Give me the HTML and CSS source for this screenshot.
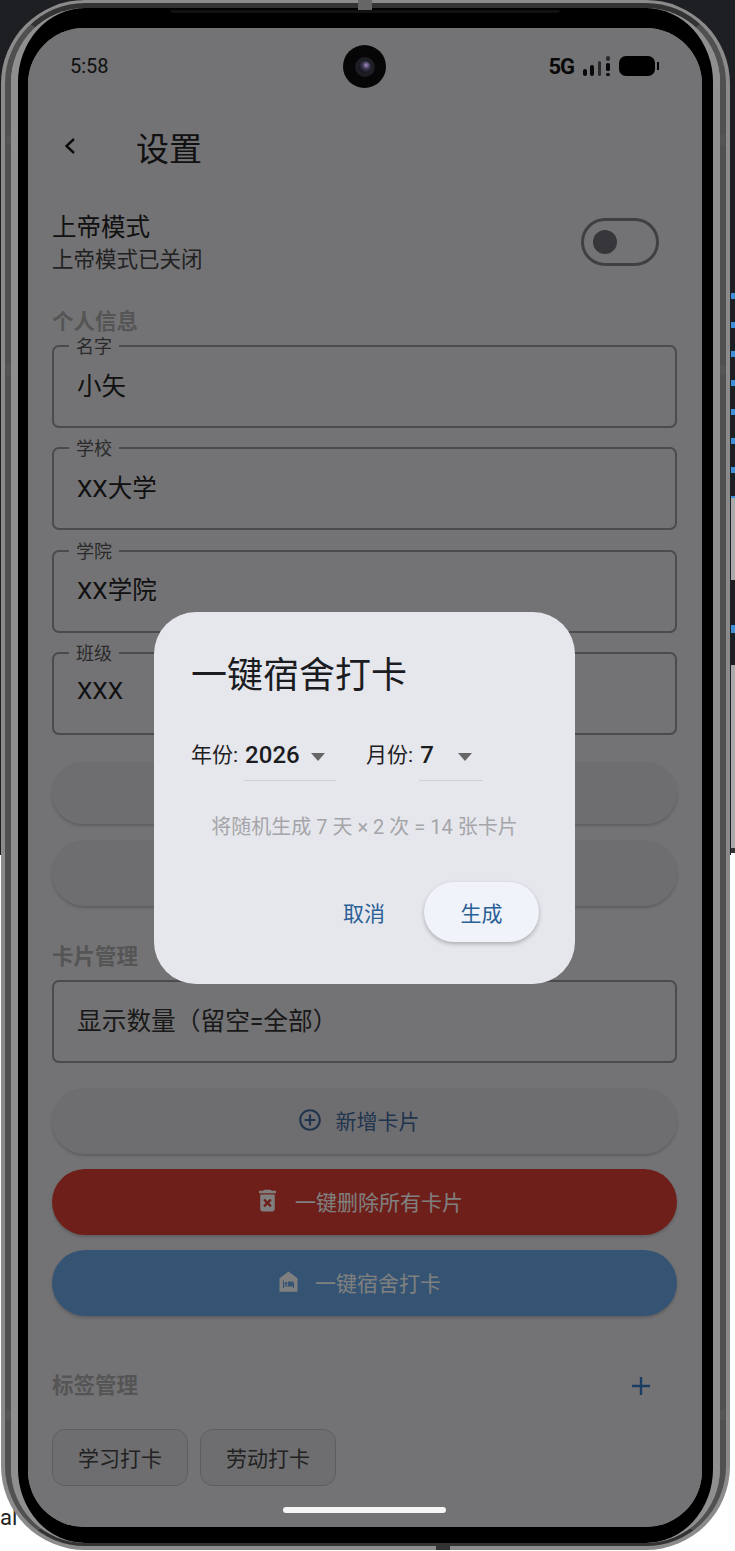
FILE: index.html
```html
<!DOCTYPE html>
<html lang="zh-CN">
<head>
  <meta charset="UTF-8">
  <title>设置</title>
  <link rel="stylesheet" href="styles.css">
</head>
<body>
  <div class="page">
    <div class="phone">
      <div class="rim">
        <div class="bezel">
          <div class="screen">

            <div class="status-bar">
              <span class="clock">5:58</span>
              <div class="status-icons">
                <span class="net">5G</span>
                <svg class="signal" width="28" height="20" viewBox="0 0 28 20">
                  <rect x="1" y="13" width="4" height="7" rx="2" fill="#111"/>
                  <rect x="8" y="9" width="4" height="11" rx="2" fill="#111"/>
                  <rect x="16" y="5" width="3" height="15" rx="1.5" fill="#555"/>
                  <rect x="24" y="0" width="4" height="5" rx="2" fill="#555"/>
                  <rect x="24" y="7" width="4" height="8" rx="1.5" fill="#111"/>
                  <rect x="24" y="17" width="4" height="3" rx="1.5" fill="#111"/>
                </svg>
                <div class="battery"></div>
              </div>
            </div>

            <div class="app-bar">
              <svg class="back" width="14" height="18" viewBox="0 0 14 18">
                <path d="M11 2L3.5 9l7.5 7" fill="none" stroke="#151515" stroke-width="2.4"/>
              </svg>
              <h1>设置</h1>
            </div>

            <div class="god-row">
              <div class="god-text">
                <div class="god-title">上帝模式</div>
                <div class="god-sub">上帝模式已关闭</div>
              </div>
              <div class="toggle"><span class="knob"></span></div>
            </div>

            <div class="content">
              <h2 class="section first">个人信息</h2>
              <div class="fields">
                <div class="field"><span class="field-label">名字</span>小矢</div>
                <div class="field"><span class="field-label">学校</span>XX大学</div>
                <div class="field"><span class="field-label">学院</span>XX学院</div>
                <div class="field"><span class="field-label">班级</span>XXX</div>
              </div>

              <div class="btn-group top-group">
                <div class="btn slim"></div>
                <div class="btn"></div>
              </div>

              <h2 class="section cards">卡片管理</h2>
              <div class="field plain">显示数量（留空=全部）</div>

              <div class="btn-group actions">
                <div class="btn">
                  <svg width="26" height="26" viewBox="0 0 24 24" fill="#42689c"><path d="M13 7h-2v4H7v2h4v4h2v-4h4v-2h-4V7zm-1-5C6.48 2 2 6.48 2 12s4.48 10 10 10 10-4.48 10-10S17.52 2 12 2zm0 18c-4.41 0-8-3.59-8-8s3.59-8 8-8 8 3.59 8 8-3.59 8-8 8z"/></svg>
                  新增卡片
                </div>
                <div class="btn danger">
                  <svg width="29" height="29" viewBox="0 0 24 24" fill="#fff"><path d="M6 19c0 1.1.9 2 2 2h8c1.1 0 2-.9 2-2V7H6v12zm2.46-7.12l1.41-1.41L12 12.59l2.12-2.12 1.41 1.41L13.41 14l2.12 2.12-1.41 1.41L12 15.41l-2.12 2.12-1.41-1.41L10.59 14l-2.13-2.12zM15.5 4l-1-1h-5l-1 1H5v2h14V4z"/></svg>
                  一键删除所有卡片
                </div>
                <div class="btn primary">
                  <svg width="27" height="27" viewBox="0 0 24 24" fill="#fff" fill-rule="evenodd"><path d="M12 3L4 9v12h16V9L12 3zM9.75 12.5c.69 0 1.25.56 1.25 1.25S10.44 15 9.75 15 8.5 14.44 8.5 13.75s.56-1.25 1.25-1.25zM17 18h-1v-1.5H8V18H7v-7h1v4.5h3.5V12H15c1.1 0 2 .9 2 2v4z"/></svg>
                  一键宿舍打卡
                </div>
              </div>

              <div class="tags-head">
                <h2 class="section">标签管理</h2>
                <svg class="tag-add" width="20" height="20" viewBox="0 0 20 20">
                  <path d="M10 1v18M1 10h18" stroke="#357ac8" stroke-width="2.4"/>
                </svg>
              </div>
              <div class="chips">
                <div class="chip">学习打卡</div>
                <div class="chip">劳动打卡</div>
              </div>
            </div>

            <!-- dialog and scrim -->
            <div class="scrim">
              <div class="dialog">
                <div class="dialog-title">一键宿舍打卡</div>
                <div class="pickers">
                  <div class="picker">
                    <span class="picker-label">年份:</span>
                    <div class="dropdown year"><b>2026</b><i class="arrow"></i></div>
                  </div>
                  <div class="picker">
                    <span class="picker-label">月份:</span>
                    <div class="dropdown month"><b>7</b><i class="arrow"></i></div>
                  </div>
                </div>
                <div class="note">将随机生成 7 天 × 2 次 = 14 张卡片</div>
                <div class="dialog-actions">
                  <span class="text-btn">取消</span>
                  <span class="text-btn raised">生成</span>
                </div>
              </div>
            </div>

            <div class="home-bar"></div>
            <div class="camera"><span class="lens"></span></div>
          </div>
        </div>
      </div>
      <span class="mark mark-tl"></span>
      <span class="mark mark-ml"></span>
      <span class="mark mark-bl"></span>
      <span class="mark mark-tr"></span>
      <span class="mark mark-mr"></span>
      <span class="mark mark-br"></span>
      <span class="cap-top"></span>
      <span class="cap-bottom"></span>
      <span class="notch-line"></span>
    </div>

    <div class="peek">
      <div class="peek-code"></div>
      <div class="peek-grey"></div>
      <div class="peek-code short"></div>
      <div class="peek-grey long"></div>
      <div class="peek-dark"></div>
      <div class="peek-white"></div>
    </div>
    <span class="stray">al</span>
  </div>
</body>
</html>
```

FILE: styles.css
```css
* {
  box-sizing: border-box;
  margin: 0;
  padding: 0;
}

body {
  font-family: Roboto, "Noto Sans CJK SC", sans-serif;
  color: #222;
}

.page {
  position: relative;
  display: flex;
  width: 735px;
  height: 1551px;
  overflow: hidden;
  background: linear-gradient(#1e1f22 0, #1e1f22 855px, #fff 855px);
}

/* phone frame */
.phone {
  position: relative;
  z-index: 1;
  flex: none;
  width: 729px;
  height: 1550px;
  margin-left: 1px;
  border: solid #8b8b8b;
  border-width: 3px 4px 4px 4px;
  border-radius: 84px;
  background: #8b8b8b;
}

.rim {
  height: 100%;
  border: solid #505050;
  border-width: 5px 6px 3px 6px;
  border-color: #333 #505050 #333 #505050;
  border-radius: 80px;
  background: #909090;
}

.bezel {
  height: 100%;
  padding: 20px 11px 16px 10px;
  overflow: hidden;
  border: solid #8f8f8f;
  border-width: 0 7px;
  border-radius: 74px;
  background: #000;
}

.screen {
  position: relative;
  height: 100%;
  overflow: hidden;
  border-radius: 56px;
  background: #e6e6ea;
}

.mark {
  position: absolute;
  width: 5px;
  height: 10px;
  background: #555;
}
.mark-tl { left: 1px; top: 132px; }
.mark-ml { left: 1px; top: 362px; }
.mark-bl { left: 1px; top: 1407px; }
.mark-tr { right: 1px; top: 132px; }
.mark-mr { right: 1px; top: 362px; }
.mark-br { right: 1px; top: 1407px; }

.cap-top, .cap-bottom {
  position: absolute;
  width: 14px;
  background: #666;
}
.cap-top { left: 353px; top: -3px; height: 10px; }
.cap-bottom { left: 431px; bottom: -4px; height: 6px; background: #333; }

.notch-line {
  position: absolute;
  left: 165px;
  top: 7px;
  width: 390px;
  height: 3px;
  background: #111;
  border-radius: 0 0 8px 8px;
}

/* the window behind the phone */
.peek {
  flex: none;
  display: flex;
  flex-direction: column;
  width: 4px;
  height: 100%;
  margin-left: 1px;
  padding-top: 270px;
}
.peek-code {
  flex: 0 0 228px;
  background: repeating-linear-gradient(#1e1f22 0, #1e1f22 23px, #3f8fd8 23px, #3f8fd8 29px);
}
.peek-code.short {
  flex: 0 0 78px;
  margin-top: 7px;
  background: linear-gradient(#1e1f22 38px, #3f8fd8 38px, #3f8fd8 46px, #1e1f22 46px);
}
.peek-grey {
  flex: 0 0 82px;
  background: #aaa;
}
.peek-grey.long {
  flex: 0 0 183px;
}
.peek-dark {
  flex: 0 0 5px;
  background: #333;
}
.peek-white {
  flex: 1;
  background: #fff;
}

.stray {
  position: absolute;
  left: 0;
  top: 1505px;
  font-size: 22px;
  line-height: 26px;
  color: #222;
}

/* status bar */
.status-bar {
  display: flex;
  justify-content: space-between;
  align-items: center;
  height: 76px;
  padding: 0 47px 0 42px;
}
.clock {
  font-size: 20px;
  color: #222;
}
.status-icons {
  display: flex;
  align-items: center;
}
.net {
  font-size: 22px;
  font-weight: 700;
  letter-spacing: -1px;
  color: #111;
  margin-right: 8px;
}
.battery {
  position: relative;
  width: 36px;
  height: 20px;
  margin-left: 9px;
  border-radius: 7px;
  background: #000;
}
.battery::after {
  content: "";
  position: absolute;
  right: -4px;
  top: 6px;
  width: 2px;
  height: 8px;
  background: #000;
}

/* app bar */
.app-bar {
  display: flex;
  align-items: center;
  height: 86px;
  padding-left: 35px;
}
.back {
  margin-right: 59px;
  margin-top: -2px;
}
h1 {
  font-size: 33px;
  font-weight: 400;
  color: #222;
}

.god-row {
  display: flex;
  justify-content: space-between;
  align-items: center;
  height: 98px;
  padding: 6px 43px 0 24px;
}
.god-text {
  margin-top: 4px;
}
.god-title {
  font-size: 24.5px;
  line-height: 32px;
  color: #222;
}
.god-sub {
  font-size: 21.5px;
  line-height: 32px;
  color: #444;
}
.toggle {
  display: flex;
  align-items: center;
  width: 78px;
  height: 48px;
  padding-left: 9px;
  border: 3px solid #808084;
  border-radius: 24px;
}
.knob {
  width: 24px;
  height: 24px;
  border-radius: 50%;
  background: #6e6e76;
}

/* form */
.content {
  padding: 0 25px 0 24px;
}
.section {
  font-size: 21.5px;
  line-height: 30px;
  font-weight: 700;
  color: #aaa;
}
.section.first {
  margin-top: 19px;
  margin-bottom: 8px;
}
.section.cards {
  margin-top: 36px;
  margin-bottom: 8px;
}
.fields {
  display: flex;
  flex-direction: column;
  gap: 19.3px;
}
.field {
  position: relative;
  display: flex;
  align-items: center;
  height: 83px;
  padding: 0 23px 5px;
  border: 2px solid #96969a;
  border-radius: 7px;
  font-size: 24.5px;
  color: #222;
}
.field-label {
  position: absolute;
  left: 15px;
  top: -12px;
  padding: 0 7px;
  font-size: 18px;
  line-height: 24px;
  color: #555;
  background: #e6e6ea;
}
.field.plain {
  font-size: 24.7px;
  color: #333;
}
.btn-group {
  display: flex;
  flex-direction: column;
  gap: 15px;
}
.top-group {
  gap: 16px;
  margin-top: 27px;
}
.actions {
  margin-top: 25px;
}
.btn {
  display: flex;
  justify-content: center;
  align-items: center;
  gap: 13px;
  height: 66px;
  padding: 0 13px 2px 0;
  border-radius: 33px;
  font-size: 21px;
  color: #42689c;
  background: #dddde3;
  box-shadow: 0 2px 3px rgba(0,0,0,.18);
}
.btn.slim {
  height: 62px;
}
.btn.danger {
  background: #de3e32;
  color: #fff;
}
.btn.primary {
  background: #6aa8e6;
  color: #fff;
}
.tags-head {
  display: flex;
  justify-content: space-between;
  align-items: center;
  margin-top: 55px;
  padding-right: 26px;
}
.chips {
  display: flex;
  gap: 12px;
  margin-top: 28px;
}
.chip {
  display: flex;
  justify-content: center;
  align-items: center;
  width: 136px;
  height: 57px;
  border: 1px solid #bcbcc0;
  border-radius: 13px;
  font-size: 21px;
  color: #444;
  background: #dcdce0;
}

/* dialog */
.scrim {
  position: absolute;
  inset: 0;
  display: flex;
  justify-content: center;
  align-items: flex-start;
  padding: 584px 1px 0 0;
  background: rgba(0,0,0,.5);
}
.dialog {
  width: 421px;
  height: 372px;
  padding: 42px 36px 0 37px;
  border-radius: 42px;
  background: #e6e7ec;
}
.dialog-title {
  font-size: 36px;
  line-height: 44px;
  color: #1b1c1f;
}
.pickers {
  display: flex;
  margin-top: 35px;
  gap: 30px;
}
.picker {
  display: flex;
  gap: 6px;
}
.picker-label {
  font-size: 21px;
  line-height: 44px;
  color: #1f2023;
}
.dropdown {
  display: flex;
  justify-content: space-between;
  align-items: center;
  height: 48px;
  padding: 0 11px 0 1px;
  border-bottom: 1px solid #d0d0d6;
}
.dropdown.year { width: 92px; }
.dropdown.month { width: 64px; }
.dropdown b {
  margin-bottom: 4px;
  font-size: 24px;
  font-weight: 500;
  color: #1b1c1f;
}
.arrow {
  width: 0;
  height: 0;
  border: solid transparent;
  border-width: 8px 7px 0;
  border-top-color: #666;
}
.note {
  margin-top: 32px;
  margin-right: 1px;
  font-size: 20px;
  line-height: 28px;
  text-align: center;
  color: #a5a5a9;
}
.dialog-actions {
  display: flex;
  justify-content: flex-end;
  align-items: center;
  gap: 39px;
  margin-top: 41px;
}
.text-btn {
  font-size: 21px;
  color: #2a5f96;
}
.text-btn.raised {
  width: 115px;
  height: 60px;
  line-height: 64px;
  border-radius: 30px;
  text-align: center;
  background: #f1f3fa;
  box-shadow: 0 2px 4px rgba(0,0,0,.25);
}

.home-bar {
  position: absolute;
  left: 255px;
  bottom: 14px;
  width: 163px;
  height: 6px;
  border-radius: 3px;
  background: #f5f5f5;
}
.camera {
  position: absolute;
  left: 315px;
  top: 17px;
  display: flex;
  justify-content: center;
  align-items: center;
  width: 43px;
  height: 43px;
  border-radius: 50%;
  background: #060606;
}
.lens {
  width: 20px;
  height: 20px;
  border-radius: 50%;
  border: 4px solid #1d1d24;
  background: radial-gradient(circle at 60% 35%, #a58ac0 0, #3a3550 35%, #11111a 75%);
}
```
